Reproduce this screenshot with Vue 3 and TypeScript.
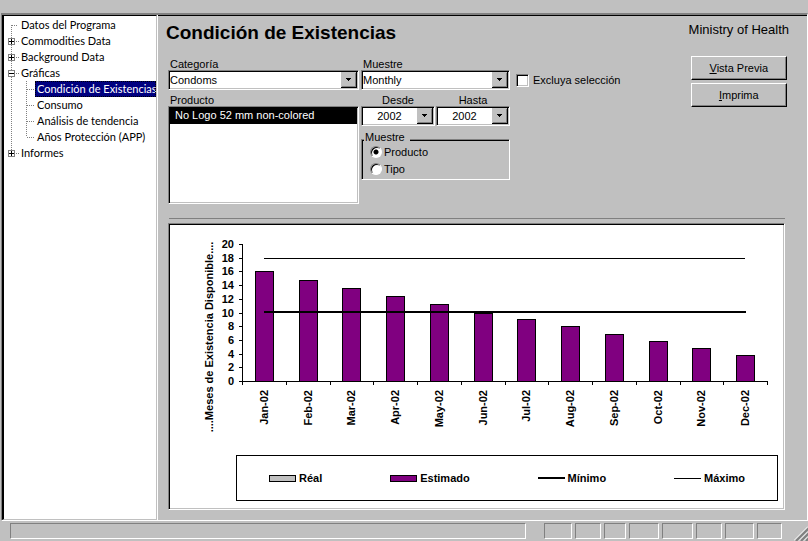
<script setup lang="ts">
import { computed, ref } from 'vue'

interface TreeNode {
  label: string
  children?: string[]
  expandable?: boolean
}

interface TreeRow {
  label: string
  level: number
  box: '' | 'plus' | 'minus'
  first: boolean
  last: boolean
  trunk: boolean
}

const nodes: TreeNode[] = [
  { label: 'Datos del Programa' },
  { label: 'Commodities Data', expandable: true },
  { label: 'Background Data', expandable: true },
  {
    label: 'Gráficas',
    expandable: true,
    children: ['Condición de Existencias', 'Consumo', 'Análisis de tendencia', 'Años Protección (APP)'],
  },
  { label: 'Informes', expandable: true },
]

const open = ref<string[]>(['Gráficas'])
const current = ref('Condición de Existencias')

const rows = computed<TreeRow[]>(() => {
  const out: TreeRow[] = []
  nodes.forEach((node, i) => {
    const last = i === nodes.length - 1
    const isOpen = open.value.includes(node.label)
    out.push({
      label: node.label,
      level: 0,
      box: node.expandable ? (isOpen ? 'minus' : 'plus') : '',
      first: i === 0,
      last,
      trunk: false,
    })
    const kids = node.children ?? []
    if (isOpen) {
      kids.forEach((label, k) => {
        out.push({ label, level: 1, box: '', first: false, last: k === kids.length - 1, trunk: !last })
      })
    }
  })
  return out
})

function toggle(label: string) {
  open.value = open.value.includes(label)
    ? open.value.filter((l) => l !== label)
    : [...open.value, label]
}

const category = ref('Condoms')
const period = ref('Monthly')
const from = ref('2002')
const to = ref('2002')
const product = ref('No Logo 52 mm non-colored')
const exclude = ref(false)
const groupBy = ref('producto')

const plot = { left: 72, right: 597, base: 156, unit: 6.85 }
const step = (plot.right - plot.left) / 12
const yOf = (v: number) => Math.round(plot.base - v * plot.unit)

const stock: [string, number][] = [
  ['Jan-02', 16],
  ['Feb-02', 14.7],
  ['Mar-02', 13.6],
  ['Apr-02', 12.4],
  ['May-02', 11.2],
  ['Jun-02', 10],
  ['Jul-02', 9],
  ['Aug-02', 8],
  ['Sep-02', 6.8],
  ['Oct-02', 5.8],
  ['Nov-02', 4.8],
  ['Dec-02', 3.8],
]

const bars = stock.map(([month, value], i) => {
  const center = Math.round(plot.left + step * (i + 0.5))
  return { month, center, top: yOf(value), height: plot.base - yOf(value) }
})
const ticks = Array.from({ length: 11 }, (_, i) => ({ value: i * 2, y: yOf(i * 2) }))
const marks = Array.from({ length: 13 }, (_, i) => Math.round(plot.left + step * i))

const cells = [28, 26, 22, 30, 31, 26, 29, 25]
</script>

<template>
  <div class="app">
    <div class="frame">
      <nav class="tree" aria-label="Navegación">
        <ul>
          <li v-for="row in rows" :key="row.label" class="row">
            <svg v-if="row.level" class="gutter root" viewBox="0 0 15 16" aria-hidden="true">
              <path v-if="row.trunk" class="dots" d="M7.5 0V16" />
            </svg>
            <button v-if="row.box" type="button" class="toggle" :aria-label="row.label" @click="toggle(row.label)">
              <svg class="gutter root" viewBox="0 0 15 16" aria-hidden="true">
                <path class="dots" :d="row.last ? 'M7.5 0V8' : 'M7.5 0V16'" />
                <path class="dots" d="M12 8.5H15" />
                <rect x="4.5" y="5.5" width="6" height="6" fill="#fff" stroke="#808080" />
                <path d="M5 8.5H10" stroke="#000" />
                <path v-if="row.box === 'plus'" d="M7.5 6V11" stroke="#000" />
              </svg>
            </button>
            <svg v-else-if="row.level" class="gutter" viewBox="0 0 16 16" aria-hidden="true">
              <path class="dots" :d="row.last ? 'M7.5 0V8' : 'M7.5 0V16'" />
              <path class="dots" d="M8 8.5H15" />
            </svg>
            <svg v-else class="gutter root" viewBox="0 0 15 16" aria-hidden="true">
              <path class="dots" :d="row.first ? 'M7.5 8V16' : 'M7.5 0V16'" />
              <path class="dots" d="M8 8.5H14" />
            </svg>
            <a href="#" :class="{ current: row.label === current }" @click.prevent="current = row.label">{{ row.label }}</a>
          </li>
        </ul>
      </nav>

      <main class="main">
        <div class="top">
          <div class="left">
            <h1>Condición de Existencias</h1>
            <form class="filters" @submit.prevent>
              <div class="col">
                <label for="category">Categoría</label>
                <div class="combo">
                  <select id="category" v-model="category">
                    <option>Condoms</option>
                  </select>
                  <svg class="arrow" viewBox="0 0 16 16" aria-hidden="true">
                    <path fill="#c0c0c0" d="M0 0H16V16H0z" />
                    <path fill="#808080" d="M14 1H15V15H1V14H14z" />
                    <path fill="#000" d="M15 0H16V16H0V15H15zM5 6H10V7H9V8H8V9H7V8H6V7H5z" />
                  </svg>
                </div>
                <label for="product" class="second">Producto</label>
                <select id="product" v-model="product" class="list" size="5">
                  <option>No Logo 52 mm non-colored</option>
                </select>
              </div>

              <div class="col">
                <label for="period">Muestre</label>
                <div class="combo">
                  <select id="period" v-model="period">
                    <option>Monthly</option>
                  </select>
                  <svg class="arrow" viewBox="0 0 16 16" aria-hidden="true">
                    <path fill="#c0c0c0" d="M0 0H16V16H0z" />
                    <path fill="#808080" d="M14 1H15V15H1V14H14z" />
                    <path fill="#000" d="M15 0H16V16H0V15H15zM5 6H10V7H9V8H8V9H7V8H6V7H5z" />
                  </svg>
                </div>
                <div class="years">
                  <div class="year">
                    <label for="from" class="second">Desde</label>
                    <div class="combo">
                      <select id="from" v-model="from">
                        <option>2002</option>
                      </select>
                      <svg class="arrow" viewBox="0 0 16 16" aria-hidden="true">
                        <path fill="#c0c0c0" d="M0 0H16V16H0z" />
                        <path fill="#808080" d="M14 1H15V15H1V14H14z" />
                        <path fill="#000" d="M15 0H16V16H0V15H15zM5 6H10V7H9V8H8V9H7V8H6V7H5z" />
                      </svg>
                    </div>
                  </div>
                  <div class="year">
                    <label for="to" class="second">Hasta</label>
                    <div class="combo">
                      <select id="to" v-model="to">
                        <option>2002</option>
                      </select>
                      <svg class="arrow" viewBox="0 0 16 16" aria-hidden="true">
                        <path fill="#c0c0c0" d="M0 0H16V16H0z" />
                        <path fill="#808080" d="M14 1H15V15H1V14H14z" />
                        <path fill="#000" d="M15 0H16V16H0V15H15zM5 6H10V7H9V8H8V9H7V8H6V7H5z" />
                      </svg>
                    </div>
                  </div>
                </div>
                <fieldset>
                  <legend>Muestre</legend>
                  <div class="radios">
                    <label><input v-model="groupBy" type="radio" name="group" value="producto" />Producto</label>
                    <label><input v-model="groupBy" type="radio" name="group" value="tipo" />Tipo</label>
                  </div>
                </fieldset>
              </div>

              <label class="check"><input v-model="exclude" type="checkbox" />Excluya selección</label>
            </form>
          </div>

          <div class="side">
            <p>Ministry of Health</p>
            <button type="button" class="push"><span><u>V</u>ista Previa</span></button>
            <button type="button" class="push"><span><u>I</u>mprima</span></button>
          </div>
        </div>

        <hr />

        <section class="chart" aria-label="Condición de Existencias">
          <svg class="plot" viewBox="0 0 613 230" role="img" aria-label="Meses de Existencia Disponible">
            <text class="t" text-anchor="middle" transform="translate(43 112) rotate(-90)">....Meses de Existencia Disponible....</text>
            <g v-for="t in ticks" :key="t.value">
              <text class="t" text-anchor="end" x="64" :y="t.y + 4">{{ t.value }}</text>
              <rect :x="plot.left - 3" :y="t.y" width="4" height="1" />
            </g>
            <g v-for="b in bars" :key="b.month">
              <rect :x="b.center - 9" :y="b.top" width="19" :height="b.height" />
              <rect :x="b.center - 8" :y="b.top + 1" width="17" :height="b.height - 1" fill="#800080" />
              <text class="t" text-anchor="end" :transform="`translate(${b.center + 4} 165) rotate(-90)`">{{ b.month }}</text>
            </g>
            <rect :x="plot.left" :y="yOf(20)" width="1" :height="plot.base - yOf(20)" />
            <rect :x="plot.left" :y="plot.base" :width="plot.right - plot.left" height="1" />
            <rect v-for="m in marks" :key="m" :x="m" :y="plot.base" width="1" height="4" />
            <rect x="94" :y="yOf(18)" width="481" height="1" />
            <rect x="94" y="86" width="482" height="2" />
          </svg>
          <ul class="legend">
            <li><i class="box real"></i>Réal</li>
            <li><i class="box estimated"></i>Estimado</li>
            <li><i class="line thick"></i>Mínimo</li>
            <li><i class="line"></i>Máximo</li>
          </ul>
        </section>
      </main>
    </div>

    <footer class="status">
      <div class="cell wide"></div>
      <div v-for="(w, i) in cells" :key="i" class="cell" :style="{ width: w + 'px' }"></div>
      <svg class="grip" viewBox="0 0 14 15" aria-hidden="true">
        <path stroke="#fff" d="M0 14.5L14 .5M5 14.5L14 5.5M10 14.5L14 10.5" />
        <path stroke="#808080" stroke-width="2" d="M2 15L15 2M7 15L15 7M12 15L15 12" />
      </svg>
    </footer>
  </div>
</template>

<style>
body {
  margin: 0;
  background: #c0c0c0;
}
</style>

<style scoped>
.app {
  display: flex;
  flex-direction: column;
  box-sizing: border-box;
  min-height: 100vh;
  padding-top: 13px;
  background: #c0c0c0;
  color: #000;
  font: 11px/16px 'Liberation Sans', Arial, sans-serif;
}
.app * {
  box-sizing: border-box;
}
.frame {
  display: flex;
  flex: 1;
  margin-left: 1px;
  border: 1px solid #fff;
  border-top: 2px solid #808080;
  border-left-color: #808080;
}
.tree {
  flex: none;
  width: 155px;
  margin-right: 1px;
  padding-top: 1px;
  background: #fff;
  border: 1px solid #c0c0c0;
  border-top-color: #000;
  border-left: 2px solid #000;
  box-shadow: 1px 0 #fff;
  font-family: Lato, 'Liberation Sans', sans-serif;
}
ul {
  margin: 0;
  padding: 0;
  list-style: none;
}
.row {
  display: flex;
  height: 16px;
  white-space: nowrap;
}
.gutter {
  display: block;
  flex: none;
  width: 16px;
  height: 16px;
  shape-rendering: crispEdges;
}
.gutter.root {
  width: 15px;
}
.dots {
  fill: none;
  stroke: #808080;
  stroke-dasharray: 1 1;
}
.toggle {
  display: block;
  padding: 0;
  border: 0;
  background: none;
}
.row a {
  padding: 0 0 0 2px;
  color: #000;
  text-decoration: none;
}
.row a.current {
  flex: 1;
  min-width: 0;
  background: #000080;
  color: #fff;
  outline: 1px dotted #000;
  outline-offset: -1px;
}
.main {
  flex: 1;
  min-width: 0;
  padding-bottom: 10px;
  border-top: 1px solid #000;
}
.top {
  display: flex;
  justify-content: space-between;
  padding-right: 18px;
}
h1 {
  margin: 5px 0 11px 8px;
  font-size: 19px;
  line-height: 24px;
  white-space: nowrap;
}
.filters {
  display: grid;
  grid-template-columns: 191px 149px auto;
  column-gap: 2px;
  margin-left: 10px;
}
.col {
  display: flex;
  flex-direction: column;
  min-width: 0;
}
.col label {
  height: 14px;
  padding-left: 2px;
}
.col .second {
  margin-top: 2px;
}
.combo {
  position: relative;
  height: 20px;
}
select {
  display: block;
  width: 100%;
  height: 20px;
  margin: 0;
  padding: 0 18px 0 1px;
  border: 1px solid;
  border-color: #808080 #fff #fff #808080;
  border-radius: 0;
  box-shadow: inset 1px 1px #000, inset -1px -1px #c0c0c0;
  background: #fff;
  color: #000;
  font: inherit;
  appearance: none;
}
.arrow {
  position: absolute;
  top: 2px;
  right: 2px;
  width: 16px;
  height: 16px;
  pointer-events: none;
  shape-rendering: crispEdges;
}
.list {
  height: 98px;
  padding: 1px;
  overflow: hidden;
}
.list option {
  min-height: 16px;
  padding: 1px 5px 0;
  line-height: 15px;
}
.list option:checked {
  background: #000 linear-gradient(#000, #000);
  color: #fff;
  -webkit-text-fill-color: #fff;
}
.years {
  display: grid;
  grid-template-columns: 1fr 1fr;
  column-gap: 1px;
}
.year {
  display: flex;
  flex-direction: column;
}
.year label {
  padding: 0;
  text-align: center;
}
.year select {
  text-align: center;
  text-align-last: center;
}
fieldset {
  min-width: 0;
  margin: 5px 0 0;
  padding: 0 0 0 8px;
  height: 49px;
  border: 1px solid;
  border-color: #808080 #fff #fff #808080;
  box-shadow: inset 1px 1px #000;
}
legend {
  margin-left: -6px;
  padding: 0 5px 4px 1px;
  background: #c0c0c0;
  line-height: 12px;
}
.radios {
  margin-top: -4px;
}
.radios label {
  display: flex;
  align-items: center;
  gap: 2px;
  height: 17px;
  padding: 0;
}
input {
  flex: none;
  margin: 0;
  background: #fff;
  appearance: none;
}
input[type='radio'] {
  width: 12px;
  height: 12px;
  border: 1px solid;
  border-color: #808080 #fff #fff #808080;
  border-radius: 50%;
  box-shadow: inset 1px 1px #000;
}
input[type='radio']:checked {
  background: radial-gradient(circle, #000 2px, #fff 3px);
}
.check {
  display: flex;
  align-items: center;
  gap: 4px;
  height: 20px;
  margin: 14px 0 0 4px;
  white-space: nowrap;
}
.check input {
  width: 13px;
  height: 13px;
  border: 1px solid;
  border-color: #808080 #fff #fff #808080;
  box-shadow: inset 1px 1px #000, inset -1px -1px #c0c0c0;
}
.check input:checked {
  background: linear-gradient(#000, #000) center / 5px 5px no-repeat #fff;
}
.side {
  display: flex;
  flex-direction: column;
  align-items: center;
  gap: 3px;
}
.side p {
  margin: 6px 0 15px;
  font-size: 13px;
  white-space: nowrap;
}
.push {
  width: 96px;
  height: 24px;
  padding: 0;
  border: 1px solid;
  border-color: #fff #000 #000 #fff;
  box-shadow: inset -1px -1px #808080;
  background: #c0c0c0;
  color: #000;
  font: inherit;
}
hr {
  height: 1px;
  margin: 14px 22px 4px 11px;
  border: 0;
  background: #808080;
}
.chart {
  margin: 0 22px 0 10px;
  padding: 1px 1px 8px;
  border: 1px solid;
  border-color: #808080 #fff #fff #808080;
  box-shadow: inset 1px 1px #000, inset -1px -1px #c0c0c0;
  background: #fff;
}
.plot {
  display: block;
  width: 100%;
  height: auto;
  shape-rendering: crispEdges;
}
.t {
  font-size: 11px;
  font-weight: bold;
}
.legend {
  display: flex;
  align-items: center;
  justify-content: space-between;
  height: 46px;
  margin: 0 5px 0 66px;
  padding: 0 32px;
  border: 1px solid #000;
  font-weight: bold;
}
.legend li {
  display: flex;
  align-items: center;
  gap: 3px;
}
.box {
  width: 27px;
  height: 7px;
  border: 1px solid #000;
}
.real {
  background: #c0c0c0;
}
.estimated {
  background: #800080;
}
.line {
  width: 27px;
  height: 1px;
  background: #000;
}
.line.thick {
  height: 2px;
}
.status {
  display: flex;
  gap: 3px;
  height: 20px;
  padding: 2px 0 0 10px;
}
.cell {
  flex: none;
  height: 16px;
  border: 1px solid;
  border-color: #808080 #fff #fff #808080;
}
.cell.wide {
  flex: 1;
  margin-right: 15px;
}
.grip {
  flex: none;
  align-self: flex-end;
  width: 14px;
  height: 15px;
  margin-left: 9px;
}
</style>
